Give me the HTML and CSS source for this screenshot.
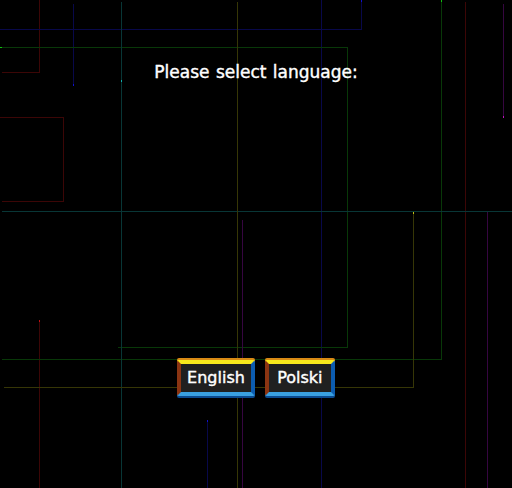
FILE: index.html
```html
<!DOCTYPE html>
<html lang="en">
<head>
  <meta charset="UTF-8">
  <meta name="viewport" content="width=device-width, initial-scale=1.0">
  <title>Language</title>
  <link rel="stylesheet" href="styles.css">
</head>
<body>
  <!-- Circuit traces behind the menu, one rect per segment -->
  <svg class="traces" viewBox="0 0 512 488" width="512" height="488">
    <g class="red">
      <rect x="39" y="0" width="1" height="73"/>
      <rect x="2" y="72" width="38" height="1"/>
      <rect x="0" y="117" width="64" height="1"/>
      <rect x="63" y="117" width="1" height="85"/>
      <rect x="2" y="201" width="62" height="1"/>
      <rect x="465" y="2" width="1" height="486"/>
      <rect x="39" y="321" width="1" height="167"/>
    </g>
    <g class="navy">
      <rect x="0" y="29" width="362" height="1"/>
      <rect x="361" y="0" width="1" height="30"/>
      <rect x="73" y="4" width="1" height="81"/>
      <rect x="321" y="0" width="1" height="488"/>
      <rect x="207" y="421" width="1" height="67"/>
    </g>
    <g class="green">
      <rect x="0" y="47" width="348" height="1"/>
      <rect x="347" y="47" width="1" height="301"/>
      <rect x="118" y="347" width="230" height="1"/>
      <rect x="441" y="0" width="1" height="360"/>
      <rect x="2" y="359" width="440" height="1"/>
    </g>
    <g class="teal">
      <rect x="121" y="2" width="1" height="486"/>
      <rect x="2" y="211" width="510" height="1"/>
    </g>
    <g class="olive">
      <rect x="237" y="2" width="1" height="486"/>
      <rect x="413" y="212" width="1" height="176"/>
      <rect x="4" y="387" width="410" height="1"/>
    </g>
    <g class="purple">
      <rect x="503" y="4" width="1" height="113"/>
      <rect x="487" y="212" width="1" height="276"/>
      <rect x="242" y="220" width="1" height="268"/>
    </g>
    <!-- bright heads at the trace ends -->
    <g>
      <rect fill="#10c010" x="0" y="47" width="2" height="1"/>
      <rect fill="#1010d0" x="361" y="0" width="1" height="2"/>
      <rect fill="#1010d0" x="73" y="84" width="1" height="2"/>
      <rect fill="#10b0b0" x="121" y="80" width="1" height="2"/>
      <rect fill="#10c010" x="441" y="0" width="1" height="2"/>
      <rect fill="#c010c0" x="503" y="116" width="1" height="2"/>
      <rect fill="#c0c010" x="413" y="212" width="1" height="2"/>
      <rect fill="#c01010" x="39" y="320" width="1" height="2"/>
      <rect fill="#1010d0" x="207" y="420" width="1" height="2"/>
    </g>
  </svg>

  <main class="menu">
    <p class="prompt">Please select language:</p>
    <div class="choices">
      <button class="lang-btn">English</button>
      <button class="lang-btn">Polski</button>
    </div>
  </main>
</body>
</html>
```

FILE: styles.css
```css
/* Page */
html, body {
  margin: 0;
  padding: 0;
  background-color: black;
  height: 100%;
  overflow: hidden;
}

body {
  position: relative;
  font-family: "DejaVu Sans", sans-serif;
  color: white;
}

.traces {
  position: absolute;
  left: 0;
  top: 0;
  shape-rendering: crispEdges;
}

.traces .red { fill: #3c0606; }
.traces .navy { fill: #08084a; }
.traces .green { fill: #083808; }
.traces .teal { fill: #083636; }
.traces .olive { fill: #363606; }
.traces .purple { fill: #360640; }

.menu {
  position: relative;
  display: flex;
  flex-direction: column;
  align-items: center;
  padding-top: 62px;
}

.prompt {
  margin: 0;
  font-size: 17px;
  line-height: 20px;
  word-spacing: 1px;
  -webkit-text-stroke: 0.4px white;
}

.choices {
  display: flex;
  gap: 10px;
  margin-top: 278px;
}

/* Beveled game-style buttons */
.lang-btn {
  font-family: "DejaVu Sans", sans-serif;
  font-size: 16px;
  line-height: 28px;
  height: 36px;
  min-width: 70px;
  padding: 0 6px;
  color: white;
  -webkit-text-stroke: 0.4px white;
  background-color: #202020;
  border-top: 4px solid #f8e81c;
  border-left: 4px solid #8a3412;
  border-right: 4px solid #0c5cb0;
  border-bottom: 4px solid #3aa0e0;
  border-radius: 2px;
  box-shadow: 0 -2px 0 #d88a14, 0 2px 0 #0a4a90;
  cursor: pointer;
}

.lang-btn:hover {
  background-color: #2c2c2c;
}
```
